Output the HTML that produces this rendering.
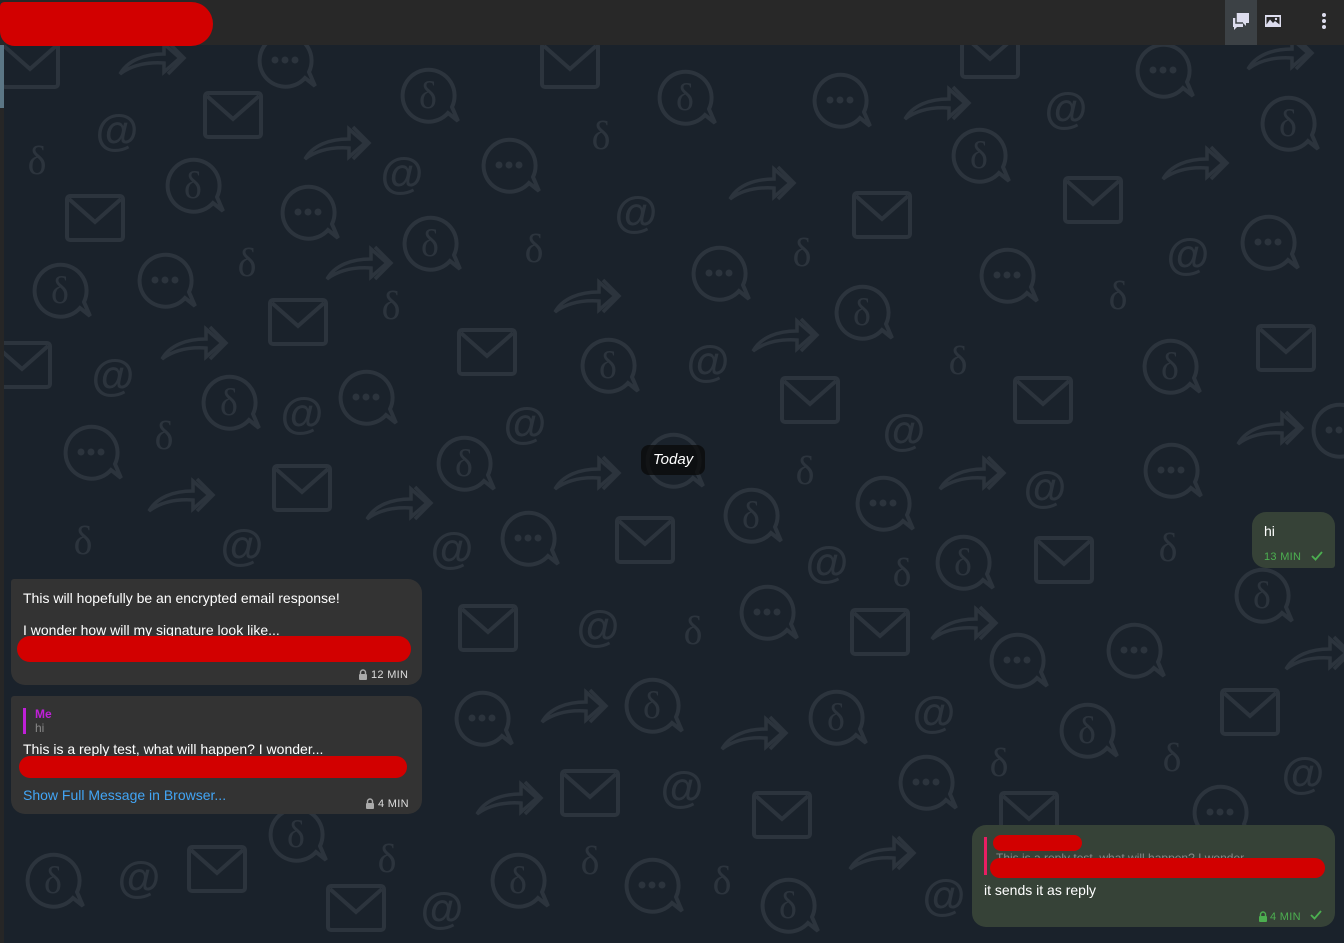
<!DOCTYPE html>
<html><head><meta charset="utf-8">
<style>
*{margin:0;padding:0;box-sizing:border-box}
body{width:1344px;height:943px;overflow:hidden;background:#1a222b;font-family:"Liberation Sans",Roboto,sans-serif;position:relative}
#bg{position:absolute;left:0;top:0}
.hdr{position:absolute;left:0;top:0;width:1344px;height:45px;background:#282828}
.strip{position:absolute;left:0;top:45px;width:4px;height:898px;background:#262626}
.sb{position:absolute;left:0;top:45px;width:4px;height:63px;background:#5b7685}
.b{position:absolute;border-radius:14px;color:#fff;font-size:14px}
.in{background:#333333}
.out{background:#364237}
.t{position:absolute;font-size:11px;letter-spacing:.3px}
.red{position:absolute;background:#d20000;border-radius:14px}
</style></head><body>
<svg id="bg" width="1344" height="943" xmlns="http://www.w3.org/2000/svg">
<defs>
<g id="env" fill="none" stroke="#2c343d" stroke-width="4"><rect x="-28" y="-22" width="56" height="44" rx="3"/><path d="M-26 -19 L0 4 L26 -19"/></g>
<g id="chat" fill="none" stroke="#2c343d" stroke-width="4"><path d="M20 18 A26 26 0 1 1 24 12 L30 26 Z"/><g fill="#2c343d" stroke="none"><circle cx="-10" cy="0" r="3.5"/><circle cx="0" cy="0" r="3.5"/><circle cx="10" cy="0" r="3.5"/></g></g>
<g id="dc" fill="none" stroke="#2c343d" stroke-width="4"><path d="M20 18 A26 26 0 1 1 24 12 L30 26 Z"/><text x="0" y="13" text-anchor="middle" font-size="38" fill="#2c343d" stroke="none" font-family="Liberation Serif,serif">δ</text></g>
<g id="arr" fill="none" stroke="#2c343d" stroke-width="3.5"><path d="M-30 14 C-22 0 -5 -6 14 -6 L14 -16 L30 -2 L14 12 L14 3 C-2 2 -18 5 -30 14 Z"/><path d="M18 -18 L34 -2 L18 14"/></g>
</defs>
<g>
<use href="#env" x="30" y="65"/><use href="#env" x="570" y="65"/><use href="#env" x="990" y="55"/><use href="#env" x="233" y="115"/><use href="#env" x="95" y="218"/><use href="#env" x="882" y="215"/><use href="#env" x="1093" y="200"/><use href="#env" x="298" y="322"/><use href="#env" x="487" y="352"/><use href="#env" x="1286" y="348"/><use href="#env" x="22" y="365"/><use href="#env" x="810" y="400"/><use href="#env" x="1043" y="400"/><use href="#env" x="302" y="488"/><use href="#env" x="645" y="540"/><use href="#env" x="1064" y="560"/><use href="#env" x="488" y="628"/><use href="#env" x="880" y="632"/><use href="#env" x="1250" y="712"/><use href="#env" x="590" y="793"/><use href="#env" x="782" y="815"/><use href="#env" x="217" y="869"/><use href="#env" x="356" y="908"/><use href="#env" x="1029" y="815"/>
<use href="#chat" x="285" y="60"/><use href="#chat" x="1163" y="70"/><use href="#chat" x="840" y="100"/><use href="#chat" x="509" y="165"/><use href="#chat" x="308" y="212"/><use href="#chat" x="1268" y="242"/><use href="#chat" x="165" y="280"/><use href="#chat" x="719" y="273"/><use href="#chat" x="1007" y="275"/><use href="#chat" x="366" y="397"/><use href="#chat" x="91" y="452"/><use href="#chat" x="1171" y="470"/><use href="#chat" x="528" y="538"/><use href="#chat" x="883" y="503"/><use href="#chat" x="1339" y="430"/><use href="#chat" x="767" y="612"/><use href="#chat" x="1134" y="650"/><use href="#chat" x="1017" y="660"/><use href="#chat" x="482" y="718"/><use href="#chat" x="926" y="782"/><use href="#chat" x="1220" y="812"/><use href="#chat" x="652" y="885"/><use href="#chat" x="673" y="460"/>
<use href="#dc" x="428" y="95"/><use href="#dc" x="685" y="97"/><use href="#dc" x="1288" y="123"/><use href="#dc" x="193" y="185"/><use href="#dc" x="979" y="155"/><use href="#dc" x="430" y="243"/><use href="#dc" x="60" y="290"/><use href="#dc" x="862" y="312"/><use href="#dc" x="608" y="365"/><use href="#dc" x="1170" y="366"/><use href="#dc" x="229" y="402"/><use href="#dc" x="464" y="463"/><use href="#dc" x="751" y="515"/><use href="#dc" x="963" y="562"/><use href="#dc" x="1262" y="595"/><use href="#dc" x="652" y="705"/><use href="#dc" x="836" y="717"/><use href="#dc" x="1087" y="730"/><use href="#dc" x="296" y="834"/><use href="#dc" x="53" y="880"/><use href="#dc" x="518" y="880"/><use href="#dc" x="788" y="905"/>
<use href="#arr" x="150" y="60"/><use href="#arr" x="1278" y="55"/><use href="#arr" x="935" y="105"/><use href="#arr" x="335" y="145"/><use href="#arr" x="760" y="185"/><use href="#arr" x="1193" y="165"/><use href="#arr" x="357" y="265"/><use href="#arr" x="585" y="298"/><use href="#arr" x="192" y="345"/><use href="#arr" x="783" y="337"/><use href="#arr" x="1268" y="430"/><use href="#arr" x="585" y="475"/><use href="#arr" x="179" y="497"/><use href="#arr" x="397" y="505"/><use href="#arr" x="970" y="475"/><use href="#arr" x="962" y="625"/><use href="#arr" x="1316" y="655"/><use href="#arr" x="572" y="708"/><use href="#arr" x="752" y="735"/><use href="#arr" x="507" y="800"/><use href="#arr" x="880" y="855"/>
</g>
<g fill="#2c343d" font-family="Liberation Sans,sans-serif" font-weight="bold" font-size="44" text-anchor="middle">
<text x="117" y="145">@</text><text x="1066" y="123">@</text><text x="402" y="188">@</text><text x="636" y="227">@</text><text x="1188" y="269">@</text><text x="708" y="376">@</text><text x="113" y="390">@</text><text x="302" y="428">@</text><text x="525" y="438">@</text><text x="904" y="445">@</text><text x="1045" y="502">@</text><text x="242" y="560">@</text><text x="452" y="563">@</text><text x="827" y="577">@</text><text x="598" y="641">@</text><text x="934" y="727">@</text><text x="682" y="802">@</text><text x="1303" y="788">@</text><text x="139" y="892">@</text><text x="442" y="923">@</text><text x="944" y="910">@</text>
</g>
<g fill="#2c343d" font-family="Liberation Serif,serif" font-size="40" text-anchor="middle">
<text x="37" y="174">δ</text><text x="601" y="149">δ</text><text x="247" y="276">δ</text><text x="534" y="262">δ</text><text x="802" y="266">δ</text><text x="391" y="319">δ</text><text x="1118" y="309">δ</text><text x="958" y="374">δ</text><text x="164" y="449">δ</text><text x="805" y="484">δ</text><text x="83" y="554">δ</text><text x="902" y="586">δ</text><text x="1168" y="561">δ</text><text x="693" y="644">δ</text><text x="999" y="776">δ</text><text x="1172" y="771">δ</text><text x="387" y="872">δ</text><text x="590" y="874">δ</text><text x="722" y="894">δ</text>
</g>
</svg>
<div class="strip"></div><div class="sb"></div>
<div class="hdr">
<div class="red" style="left:0;top:2px;width:213px;height:44px;border-radius:6px 30px 30px 20px"></div>
<div style="position:absolute;left:1225px;top:0;width:32px;height:45px;background:#3c4145"></div>
<svg style="position:absolute;left:1231px;top:11px" width="20" height="20" viewBox="0 0 20 20"><rect x="5" y="2" width="13" height="10" fill="#dde"/><path d="M12 12 L15 15 L15 12Z" fill="#dde"/><rect x="2" y="7" width="10" height="9" fill="#dde"/><path d="M3 16 L3 19 L6 16Z" fill="#dde"/><path d="M5 2 V12 H12" stroke="#3c4145" stroke-width="1.5" fill="none"/></svg>
<svg style="position:absolute;left:1265px;top:14px" width="17" height="14" viewBox="0 0 17 14"><rect x="0" y="1" width="16" height="12" fill="#dde"/><rect x="1.5" y="3" width="13" height="7.5" fill="#282828"/><path d="M1.5 10.5 L5 5.5 L8 9 L10 7 L14.5 10.5Z" fill="#dde"/><circle cx="11" cy="5" r="1.2" fill="#dde"/></svg>
<div style="position:absolute;left:1322px;top:13px;width:4px;height:4px;border-radius:2px;background:#dde;box-shadow:0 6px 0 #dde,0 12px 0 #dde"></div>
</div>

<div style="position:absolute;left:641px;top:445px;width:64px;height:30px;background:rgba(10,10,10,.75);border-radius:8px;color:#fff;font-style:italic;font-size:15px;text-align:center;line-height:30px">Today</div>

<div class="b out" style="left:1252px;top:512px;width:83px;height:56px;border-bottom-right-radius:3px">
<div style="position:absolute;left:12px;top:11px">hi</div>
<div class="t" style="left:12px;top:39px;color:#4caf50">13 MIN</div>
<svg style="position:absolute;left:58px;top:38px" width="14" height="12"><path d="M2 6 L5.5 9.5 L12 2" stroke="#4caf50" stroke-width="1.8" fill="none"/></svg>
</div>

<div class="b in" style="left:11px;top:579px;width:411px;height:106px;border-top-left-radius:3px">
<div style="position:absolute;left:12px;top:11px">This will hopefully be an encrypted email response!</div>
<div style="position:absolute;left:12px;top:43px">I wonder how will my signature look like...</div>
<div class="red" style="left:6px;top:57px;width:394px;height:26px"></div>
<svg style="position:absolute;left:347px;top:90px" width="10" height="11"><path d="M2.5 5 V3.5 A2.5 2.5 0 0 1 7.5 3.5 V5" stroke="#aaa" stroke-width="1.4" fill="none"/><rect x="1" y="5" width="8" height="6" rx="1" fill="#aaa"/></svg>
<div class="t" style="left:360px;top:90px;color:#ddd">12 MIN</div>
</div>

<div class="b in" style="left:11px;top:696px;width:411px;height:118px;border-top-left-radius:3px">
<div style="position:absolute;left:12px;top:12px;width:3px;height:26px;background:#c020d8"></div>
<div style="position:absolute;left:24px;top:11px;color:#c020d8;font-size:12px;font-weight:bold">Me</div>
<div style="position:absolute;left:24px;top:25px;color:#888;font-size:12px">hi</div>
<div style="position:absolute;left:12px;top:45px">This is a reply test, what will happen? I wonder...</div>
<div class="red" style="left:8px;top:60px;width:388px;height:22px"></div>
<div style="position:absolute;left:12px;top:91px;color:#42a5f5">Show Full Message in Browser...</div>
<svg style="position:absolute;left:354px;top:102px" width="10" height="11"><path d="M2.5 5 V3.5 A2.5 2.5 0 0 1 7.5 3.5 V5" stroke="#aaa" stroke-width="1.4" fill="none"/><rect x="1" y="5" width="8" height="6" rx="1" fill="#aaa"/></svg>
<div class="t" style="left:367px;top:102px;color:#ddd">4 MIN</div>
</div>

<div class="b out" style="left:972px;top:825px;width:363px;height:102px">
<div style="position:absolute;left:12px;top:12px;width:3px;height:38px;background:#e91e63"></div>
<div class="red" style="left:21px;top:10px;width:89px;height:16px"></div>
<div style="position:absolute;left:24px;top:26px;color:#888;font-size:12px">This is a reply test, what will happen? I wonder.</div>
<div class="red" style="left:18px;top:33px;width:335px;height:20px"></div>
<div style="position:absolute;left:12px;top:57px">it sends it as reply</div>
<svg style="position:absolute;left:286px;top:86px" width="10" height="11"><path d="M2.5 5 V3.5 A2.5 2.5 0 0 1 7.5 3.5 V5" stroke="#4caf50" stroke-width="1.4" fill="none"/><rect x="1" y="5" width="8" height="6" rx="1" fill="#4caf50"/></svg>
<div class="t" style="left:298px;top:86px;color:#4caf50">4 MIN</div>
<svg style="position:absolute;left:337px;top:84px" width="14" height="12"><path d="M2 6 L5.5 9.5 L12 2" stroke="#4caf50" stroke-width="1.8" fill="none"/></svg>
</div>
</body></html>
